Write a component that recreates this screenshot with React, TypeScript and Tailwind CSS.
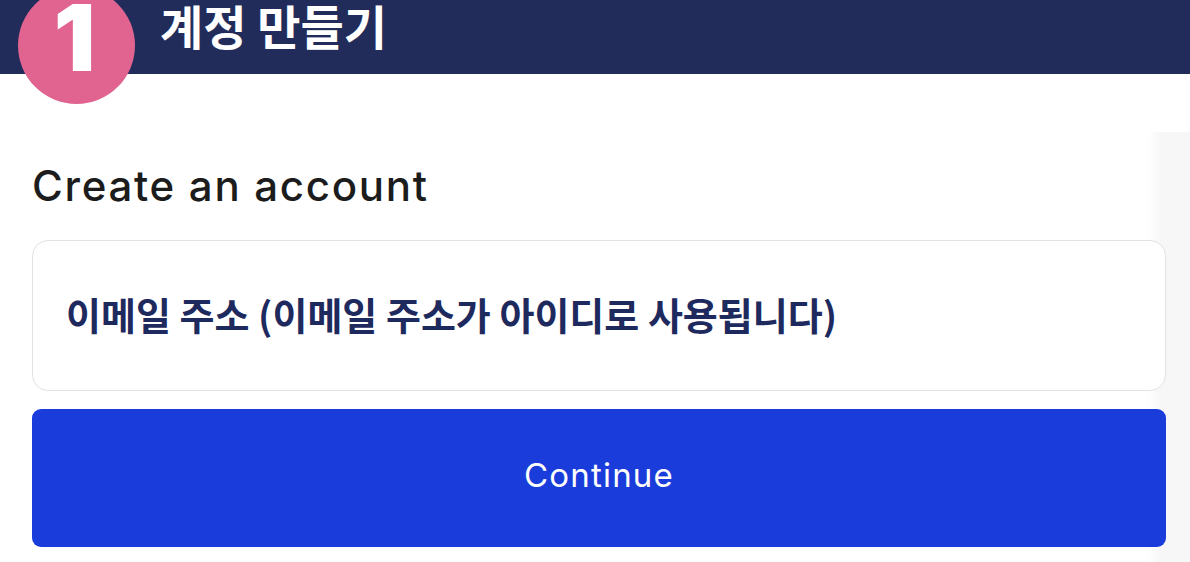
import React from 'react';

const App: React.FC = () => {
  return (
    <div className="relative w-[1190px] h-[562px] overflow-hidden bg-white font-['Inter','Noto_Sans_CJK_KR',sans-serif]">
      {/* header bar */}
      <div className="h-[74px] bg-[#222c5b] flex items-start pl-[160px] pt-[2px]">
        <h1 className="text-[47px] leading-[46px] font-bold text-white font-['Noto_Sans_CJK_KR',sans-serif]">
          계정 만들기
        </h1>
      </div>

      {/* step badge */}
      <div className="absolute left-[18px] top-[-13px] w-[117px] h-[117px] rounded-full bg-[#e0648f] flex items-start justify-center">
        <span className="mt-[16px] -ml-[4px] text-[92px] leading-[70px] font-black text-white">1</span>
      </div>

      <div className="mt-[58px] h-[430px] bg-[linear-gradient(to_right,#ffffff_1148px,#f7f7f7_1160px)] px-[32px] pt-[30px] pr-[24px]">
        <h2 className="text-[42px] leading-[48px] font-medium text-[#1c1c1c] tracking-[1.7px]">
          Create an account
        </h2>

        <div className="mt-[30px] h-[151px] rounded-[16px] border border-[#e2e2e2] bg-white flex items-center pl-[33px]">
          <span className="text-[38px] font-bold text-[#1e2a5e] font-['Noto_Sans_CJK_KR',sans-serif] -mt-[4px]">
            이메일 주소 (이메일 주소가 아이디로 사용됩니다)
          </span>
        </div>

        <button
          type="button"
          className="mt-[18px] w-full h-[138px] rounded-[9px] bg-[#1a3cdb] text-white text-[33px] tracking-[1.2px] font-normal flex items-center justify-center pb-[4px]"
        >
          Continue
        </button>
      </div>
    </div>
  );
};

export default App;
